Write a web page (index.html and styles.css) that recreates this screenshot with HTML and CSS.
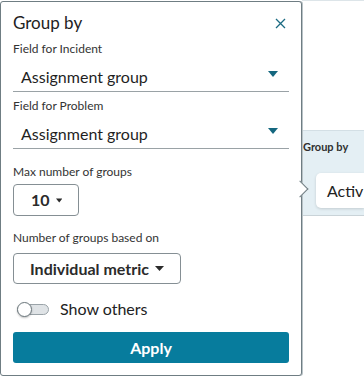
FILE: index.html
```html
<!DOCTYPE html>
<html>
  <head>
    <title>Group by</title>
    <link rel="stylesheet" href="styles.css">
  </head>
  <body>
    <div class="stage">
      <section class="popover">
        <header class="pop-head">
          <h2 class="pop-title">Group by</h2>
          <button class="close" type="button" aria-label="Close">
            <svg width="11" height="11" viewBox="0 0 11 11"><path d="M1 1 L10 10 M10 1 L1 10" stroke="#1a6a82" stroke-width="1.3" fill="none"/></svg>
          </button>
        </header>

        <div class="field">
          <div class="label">Field for Incident</div>
          <div class="line-select">
            <span>Assignment group</span>
            <svg class="caret" width="10" height="6" viewBox="0 0 10 6"><path d="M0 0 H10 L5 6 Z" fill="#14677f"/></svg>
          </div>
        </div>

        <div class="field">
          <div class="label">Field for Problem</div>
          <div class="line-select">
            <span>Assignment group</span>
            <svg class="caret" width="10" height="6" viewBox="0 0 10 6"><path d="M0 0 H10 L5 6 Z" fill="#14677f"/></svg>
          </div>
        </div>

        <div class="field spaced">
          <div class="label">Max number of groups</div>
          <div class="box-select small">
            <span>10</span>
            <svg width="8" height="5" viewBox="0 0 8 5"><path d="M0 0 H8 L4 5 Z" fill="#2b2b2b"/></svg>
          </div>
        </div>

        <div class="field spaced based">
          <div class="label">Number of groups based on</div>
          <div class="box-select">
            <span>Individual metric</span>
            <svg width="9" height="5" viewBox="0 0 9 5"><path d="M0 0 H9 L4.5 5 Z" fill="#2b2b2b"/></svg>
          </div>
        </div>

        <label class="toggle-row">
          <span class="toggle"><span class="knob"></span></span>
          <span>Show others</span>
        </label>

        <button class="apply" type="button">Apply</button>

        <span class="pointer"></span>
      </section>

      <aside class="behind">
        <div class="band">
          <div class="band-title">Group by</div>
          <div class="chip">Activ</div>
        </div>
      </aside>
    </div>
  </body>
</html>
```

FILE: styles.css
```css
/* group by popover */
html, body {
  margin: 0;
  padding: 0;
  background: #ffffff;
}
body {
  font-family: Lato, "Open Sans", sans-serif;
  color: #2a2a2a;
}
.stage {
  display: flex;
  width: 364px;
  height: 377px;
  overflow: hidden;
}

.popover {
  position: relative;
  z-index: 2;
  box-sizing: border-box;
  width: 302px;
  flex: none;
  margin-top: 1px;
  align-self: flex-start;
  background: #ffffff;
  border: 1px solid #6f7d83;
  border-radius: 3px;
  padding: 11px 12px 12px 12px;
  box-shadow: 1px 0 0 #b9c3c7;
}
.pop-head {
  display: flex;
  align-items: center;
  justify-content: space-between;
  height: 20px;
  margin-bottom: 8px;
}
.pop-title {
  margin: 0;
  font-size: 17px;
  font-weight: 400;
  line-height: 20px;
  color: #222;
}
.close {
  display: flex;
  border: none;
  background: none;
  padding: 0;
  margin-right: 3px;
}

.field + .field {
  margin-top: 6px;
}
.field.spaced {
  margin-top: 15px;
}
.field.based {
  margin-top: 14px;
}
.label {
  font-size: 12px;
  line-height: 16px;
  color: #333;
}
.line-select {
  display: flex;
  align-items: center;
  justify-content: space-between;
  padding: 10px 11px 4px 8px;
  border-bottom: 1px solid #9aa2a6;
  font-size: 16px;
  line-height: 20px;
  color: #1f1f1f;
}
.line-select .caret {
  margin-top: -7px;
}
.spaced .label {
  margin-bottom: 4px;
}
.based .label {
  margin-bottom: 7px;
}
.box-select {
  display: inline-flex;
  align-items: center;
  gap: 6px;
  box-sizing: border-box;
  height: 31px;
  padding: 0 16px 0 16px;
  border: 1px solid #858f94;
  border-radius: 4px;
  font-size: 16px;
  font-weight: 700;
  line-height: 20px;
  color: #2b2b2b;
}
.box-select.small {
  width: 66px;
  height: 32px;
  padding-left: 17px;
}

.toggle-row {
  display: flex;
  align-items: center;
  margin-top: 15px;
  padding-left: 4px;
  font-size: 16px;
  line-height: 20px;
  color: #222;
}
.toggle {
  position: relative;
  box-sizing: border-box;
  width: 32px;
  height: 11px;
  margin-right: 11px;
  border: 1px solid #9aa3a8;
  border-radius: 6px;
  background: #dfe3e6;
}
.knob {
  position: absolute;
  left: -1px;
  top: -3px;
  box-sizing: border-box;
  width: 15px;
  height: 15px;
  border-radius: 50%;
  border: 1px solid #6c787d;
  background: #ffffff;
  box-shadow: 0 1px 2px rgba(0, 0, 0, 0.25);
}

.apply {
  display: block;
  width: 100%;
  height: 31px;
  margin-top: 13px;
  border: none;
  border-radius: 3px;
  background: #077c9d;
  color: #ffffff;
  font-family: Lato, "Open Sans", sans-serif;
  font-size: 16px;
  font-weight: 700;
}

.pointer {
  position: absolute;
  right: -5px;
  top: 181px;
  width: 11px;
  height: 11px;
  background: #ffffff;
  border-top: 1px solid #6f7d83;
  border-right: 1px solid #6f7d83;
  transform: rotate(45deg);
}

.behind {
  flex: 1;
  border-top: 1px solid #dde5e9;
  align-self: flex-start;
  margin-top: 0;
}
.band {
  box-sizing: border-box;
  height: 86px;
  margin-top: 129px;
  padding: 9px 0 0 1px;
  background: #e4eff4;
  border-top: 1px solid #d3dfe5;
  border-bottom: 1px solid #c9d3d8;
}
.band-title {
  font-size: 11px;
  font-weight: 700;
  line-height: 14px;
  color: #2f2f2f;
}
.chip {
  margin: 19px 0 0 13px;
  height: 35px;
  padding-left: 11px;
  border-radius: 5px 0 0 5px;
  background: #ffffff;
  box-shadow: 0 1px 3px rgba(0, 0, 0, 0.15);
  font-size: 16px;
  line-height: 35px;
  color: #222;
  white-space: nowrap;
}
```
